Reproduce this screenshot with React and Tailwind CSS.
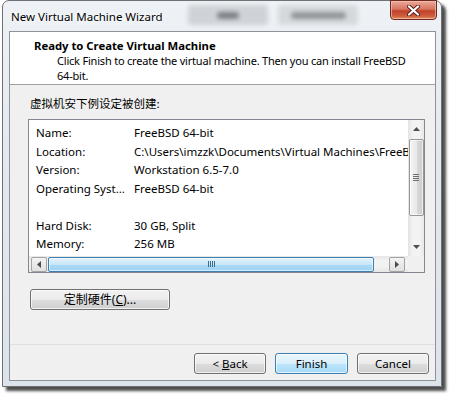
import React from "react";

const rows = [
  ["Name:", "FreeBSD 64-bit"],
  ["Location:", "C:\\Users\\imzzk\\Documents\\Virtual Machines\\FreeBSD 64-bit\\FreeBSD 64-bit.vmx"],
  ["Version:", "Workstation 6.5-7.0"],
  ["Operating Syst...", "FreeBSD 64-bit"],
  ["", ""],
  ["Hard Disk:", "30 GB, Split"],
  ["Memory:", "256 MB"],
];

const Tri = ({ dir }) => {
  const pts = {
    up: "0,4 3.5,0 7,4",
    down: "0,0 3.5,4 7,0",
    left: "4,0 0,3.5 4,7",
    right: "0,0 4,3.5 0,7",
  }[dir];
  const vertical = dir === "up" || dir === "down";
  return (
    <svg width={vertical ? 7 : 4} height={vertical ? 4 : 7} viewBox={vertical ? "0 0 7 4" : "0 0 4 7"}>
      <polygon points={pts} fill="#4d4d4d" />
    </svg>
  );
};

const WinButton = ({ children, primary, className = "" }) => (
  <div
    className={`flex items-center justify-center h-[21px] rounded-[3px] border text-black ${
      primary
        ? "border-[#3c7fb1] bg-[linear-gradient(#eaf6fd_0%,#d9f0fc_50%,#bee6fd_51%,#a7d9f5_100%)] shadow-[inset_0_0_0_1px_#ffffffa0]"
        : "border-[#707070] bg-[linear-gradient(#f2f2f2_0%,#ebebeb_50%,#dddddd_51%,#cfcfcf_100%)] shadow-[inset_0_0_0_1px_#ffffffb0]"
    } ${className}`}
  >
    {children}
  </div>
);

export default function App() {
  return (
    <div className="w-[450px] h-[395px] bg-white overflow-hidden font-['Segoe_UI','Noto_Sans','Noto_Sans_CJK_SC',sans-serif] text-[11.5px] text-black">
      {/* window */}
      <div className="ml-[2px] w-[440px] h-[387px] rounded-t-[7px] border border-[#6d7176] bg-[linear-gradient(180deg,#eef2f6_0%,#e4e9ef_40%,#dde3ea_100%)] shadow-[4px_4px_3px_rgba(0,0,0,0.7)] flex flex-col">
        {/* title bar */}
        <div className="h-[30px] flex items-start pl-[8px] pr-[4px]">
          <div className="mt-[8px] leading-[15px] [text-shadow:0_0_6px_#fff,0_0_3px_#fff]">
            New Virtual Machine Wizard
          </div>
          <div className="flex-1" />
          <div className="mt-[4px] w-[80px] h-[20px] rounded-[4px] bg-[#cfd3d7] blur-[2px] flex items-center justify-center">
            <div className="w-[22px] h-[7px] bg-[#7e8286] rounded" />
          </div>
          <div className="ml-[10px] mt-[4px] w-[80px] h-[20px] rounded-[4px] bg-[#d5d9dc] blur-[2px] flex items-center justify-center">
            <div className="w-[55px] h-[7px] bg-[#92969a] rounded" />
          </div>
          <div className="ml-[32px] w-[47px] h-[20px] -mt-[1px] rounded-b-[4px] border border-[#6e2a1f] bg-[linear-gradient(#e9a99b_0%,#d7765f_45%,#c2412a_55%,#cf5f3f_85%,#e59a6e_100%)] shadow-[inset_0_0_0_1px_#f5c6b8a0] flex items-center justify-center">
            <svg width="13" height="11" viewBox="0 0 13 11">
              <path d="M2 1.5 L11 9.5 M11 1.5 L2 9.5" stroke="#5a1c14" strokeWidth="4" strokeLinecap="round" />
              <path d="M2 1.5 L11 9.5 M11 1.5 L2 9.5" stroke="#ffffff" strokeWidth="2.2" strokeLinecap="round" />
            </svg>
          </div>
        </div>

        {/* client area */}
        <div className="ml-[6px] w-[427px] h-[350px] border border-[#8d9399] bg-[#f0f0f0] flex flex-col">
          {/* header */}
          <div className="h-[53px] bg-white border-b border-[#a0a0a0] pl-[24px] pt-[6px] leading-[15px]">
            <div className="font-bold text-[11.3px]">Ready to Create Virtual Machine</div>
            <div className="pl-[23px] whitespace-nowrap text-[11px] tracking-[-0.2px]">
              Click Finish to create the virtual machine. Then you can install FreeBSD
              <br />
              64-bit.
            </div>
          </div>

          {/* body */}
          <div className="flex-1 pl-[18px] pt-[10px]">
            <div className="ml-[2px] leading-[16px] text-[11.5px] font-['Noto_Sans_CJK_SC',sans-serif]">
              虚拟机安下例设定被创建:
            </div>

            {/* list */}
            <div className="mt-[8px] w-[397px] h-[154px] border border-[#828790] bg-white flex flex-col">
              <div className="h-[136px] flex">
                <div className="flex-1 overflow-hidden pl-[7px] pt-[3.5px]">
                  {rows.map(([k, v], i) => (
                    <div key={i} className="h-[18.5px] flex items-center whitespace-nowrap">
                      <div className="w-[98px] shrink-0">{k}</div>
                      <div>{v}</div>
                    </div>
                  ))}
                </div>
                {/* vertical scrollbar */}
                <div className="w-[16px] bg-[linear-gradient(90deg,#e3e3e3,#f3f3f3_30%,#f3f3f3_70%,#e8e8e8)] flex flex-col items-center">
                  <div className="h-[18px] flex items-center justify-center">
                    <Tri dir="up" />
                  </div>
                  <div className="mt-[1px] w-[15px] h-[77px] rounded-[2px] border border-[#979797] bg-[linear-gradient(90deg,#f4f4f4,#e9e9e9_50%,#d9d9d9_51%,#cdcdcd)] shadow-[inset_0_0_0_1px_#ffffffa0] flex items-center justify-center">
                    <div className="flex flex-col gap-[1px]">
                      <div className="w-[6px] h-[1px] bg-[#6d6d6d]" />
                      <div className="w-[6px] h-[1px] bg-[#6d6d6d]" />
                      <div className="w-[6px] h-[1px] bg-[#6d6d6d]" />
                      <div className="w-[6px] h-[1px] bg-[#6d6d6d]" />
                    </div>
                  </div>
                  <div className="flex-1" />
                  <div className="h-[18px] flex items-center justify-center">
                    <Tri dir="down" />
                  </div>
                </div>
              </div>
              {/* horizontal scrollbar */}
              <div className="h-[16px] flex">
                <div className="flex-1 flex items-center pl-[2px] pr-[3px] bg-[linear-gradient(#e6e6e6,#f2f2f2_30%,#f2f2f2_70%,#e6e6e6)]">
                  <div className="w-[16px] h-[15px] rounded-[2px] border border-[#a3a3a3] bg-[linear-gradient(#f3f3f3,#e0e0e0)] flex items-center justify-center">
                    <Tri dir="left" />
                  </div>
                  <div className="ml-[1px] w-[326px] h-[15px] rounded-[2px] border border-[#3c7fb1] bg-[linear-gradient(#e4f3fc_0%,#c9e7f9_50%,#a9d9f5_51%,#a0d4f3_100%)] shadow-[inset_0_0_0_1px_#ffffff90] flex items-center justify-center">
                    <div className="flex gap-[1px]">
                      <div className="w-[1px] h-[6px] bg-[#3f6d8c]" />
                      <div className="w-[1px] h-[6px] bg-[#3f6d8c]" />
                      <div className="w-[1px] h-[6px] bg-[#3f6d8c]" />
                      <div className="w-[1px] h-[6px] bg-[#3f6d8c]" />
                    </div>
                  </div>
                  <div className="flex-1" />
                  <div className="w-[16px] h-[15px] rounded-[2px] border border-[#a3a3a3] bg-[linear-gradient(#f3f3f3,#e0e0e0)] flex items-center justify-center">
                    <Tri dir="right" />
                  </div>
                </div>
                <div className="w-[16px] bg-[#f0f0f0]" />
              </div>
            </div>

            <WinButton className="mt-[16px] ml-[2px] w-[140px] text-[12px]">
              定制硬件(<span className="underline">C</span>)...
            </WinButton>
          </div>

          {/* footer */}
          <div className="h-[36px] border-t border-[#dfdfdf] flex justify-end gap-[9px] pr-[6px] pt-[8px]">
            <WinButton className="w-[72px]">
              &lt; <span className="underline ml-[3px]">B</span>ack
            </WinButton>
            <WinButton primary className="w-[73px]">Finish</WinButton>
            <WinButton className="w-[72px]">Cancel</WinButton>
          </div>
        </div>
      </div>
    </div>
  );
}
